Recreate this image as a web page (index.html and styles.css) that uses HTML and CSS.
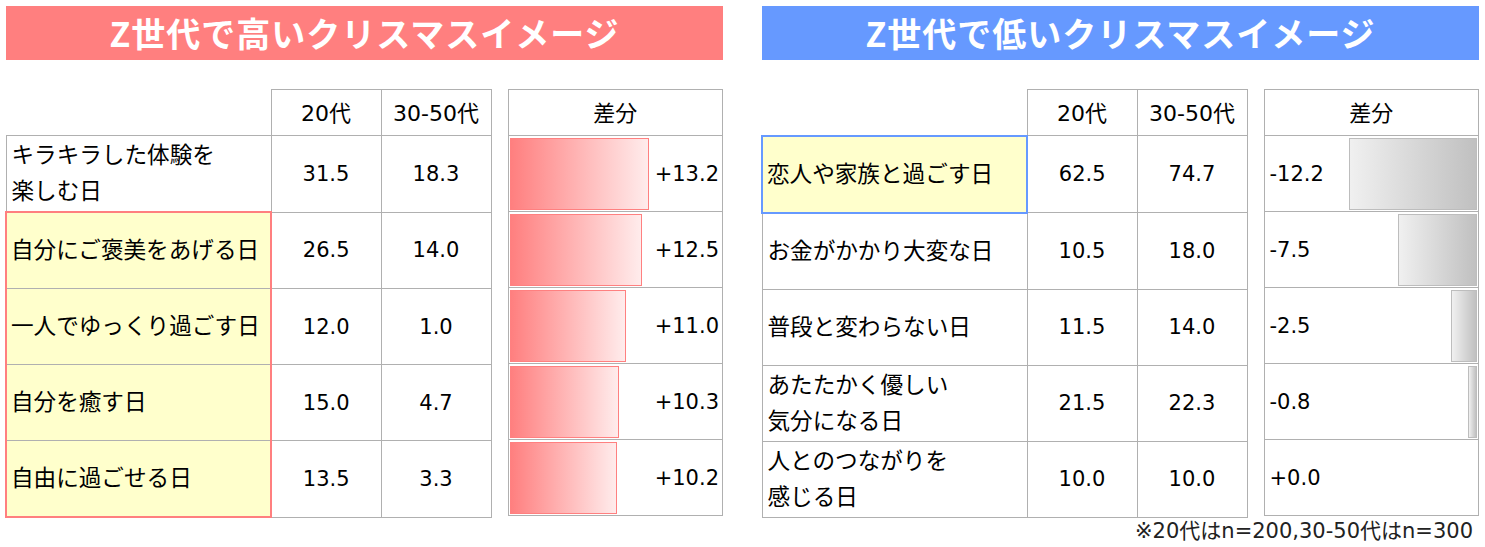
FILE: index.html
```html
<!DOCTYPE html>
<html lang="ja">
<head>
<meta charset="utf-8">
<title>Z世代のクリスマスイメージ</title>
<link rel="stylesheet" href="styles.css">
</head>
<body>
<div class="page">
  <section class="panel">
    <h2 class="title title-pink">Z世代で高いクリスマスイメージ</h2>
    <div class="tables">
      <table class="main">
        <colgroup><col class="c-label"><col class="c-num"><col class="c-num"></colgroup>
        <tr class="head"><th class="blank"></th><th>20代</th><th>30-50代</th></tr>
        <tr><td class="label"><span>キラキラした体験を<br>楽しむ日</span></td><td class="num">31.5</td><td class="num">18.3</td></tr>
        <tr><td class="label hl-pink first">自分にご褒美をあげる日</td><td class="num">26.5</td><td class="num">14.0</td></tr>
        <tr><td class="label hl-pink">一人でゆっくり過ごす日</td><td class="num">12.0</td><td class="num">1.0</td></tr>
        <tr><td class="label hl-pink">自分を癒す日</td><td class="num">15.0</td><td class="num">4.7</td></tr>
        <tr><td class="label hl-pink last">自由に過ごせる日</td><td class="num">13.5</td><td class="num">3.3</td></tr>
      </table>
      <table class="diff">
        <tr class="head"><th>差分</th></tr>
        <tr><td><div class="dcell pos"><div class="bar bar-pink" style="width:139px"></div><span class="val">+13.2</span></div></td></tr>
        <tr><td><div class="dcell pos"><div class="bar bar-pink" style="width:132px"></div><span class="val">+12.5</span></div></td></tr>
        <tr><td><div class="dcell pos"><div class="bar bar-pink" style="width:116px"></div><span class="val">+11.0</span></div></td></tr>
        <tr><td><div class="dcell pos"><div class="bar bar-pink" style="width:109px"></div><span class="val">+10.3</span></div></td></tr>
        <tr><td><div class="dcell pos"><div class="bar bar-pink" style="width:107px"></div><span class="val">+10.2</span></div></td></tr>
      </table>
    </div>
  </section>
  <section class="panel">
    <h2 class="title title-blue">Z世代で低いクリスマスイメージ</h2>
    <div class="tables">
      <table class="main">
        <colgroup><col class="c-label"><col class="c-num"><col class="c-num"></colgroup>
        <tr class="head"><th class="blank"></th><th>20代</th><th>30-50代</th></tr>
        <tr><td class="label hl-blue">恋人や家族と過ごす日</td><td class="num">62.5</td><td class="num">74.7</td></tr>
        <tr><td class="label">お金がかかり大変な日</td><td class="num">10.5</td><td class="num">18.0</td></tr>
        <tr><td class="label">普段と変わらない日</td><td class="num">11.5</td><td class="num">14.0</td></tr>
        <tr><td class="label"><span>あたたかく優しい<br>気分になる日</span></td><td class="num">21.5</td><td class="num">22.3</td></tr>
        <tr><td class="label"><span>人とのつながりを<br>感じる日</span></td><td class="num">10.0</td><td class="num">10.0</td></tr>
      </table>
      <table class="diff">
        <tr class="head"><th>差分</th></tr>
        <tr><td><div class="dcell neg"><span class="val">-12.2</span><div class="bar bar-grey" style="width:128px"></div></div></td></tr>
        <tr><td><div class="dcell neg"><span class="val">-7.5</span><div class="bar bar-grey" style="width:79px"></div></div></td></tr>
        <tr><td><div class="dcell neg"><span class="val">-2.5</span><div class="bar bar-grey" style="width:26px"></div></div></td></tr>
        <tr><td><div class="dcell neg"><span class="val">-0.8</span><div class="bar bar-grey" style="width:9px"></div></div></td></tr>
        <tr><td><div class="dcell neg"><span class="val">+0.0</span></div></td></tr>
      </table>
    </div>
    <p class="note">※20代はn=200,30-50代はn=300</p>
  </section>
</div>
</body>
</html>
```

FILE: styles.css
```css
html, body {
  margin: 0;
  padding: 0;
  background: #fff;
}
body {
  font-family: "DejaVu Sans", "Noto Sans CJK JP", sans-serif;
  color: #000;
}
.page {
  display: flex;
  gap: 39px;
  padding: 6px 6px 0 6px;
}
.panel {
  width: 717px;
  display: flex;
  flex-direction: column;
}
.title {
  margin: 0;
  height: 54px;
  line-height: 54px;
  text-align: center;
  color: #fff;
  font-family: "Noto Sans CJK JP", sans-serif;
  font-weight: 700;
  font-size: 34px;
  letter-spacing: 1px;
}
.title-pink { background: #ff7f7f; }
.title-blue { background: #6699ff; }
.tables {
  display: flex;
  gap: 16px;
  margin-top: 29px;
  margin-left: -1px;
  align-items: flex-start;
}
table {
  border-collapse: collapse;
  table-layout: fixed;
  font-size: 21px;
}
table.main { width: 486px; }
table.diff { width: 216px; }
.c-label { width: 265px; }
.c-num { width: 110px; }
th, td {
  border: 1px solid #b0b0b0;
  padding: 0;
  font-weight: 400;
}
tr.head th {
  height: 41px;
  padding-bottom: 4px;
  text-align: center;
  vertical-align: middle;
  font-size: 22px;
}
th.blank {
  border-top: hidden;
  border-left: hidden;
}
td {
  height: 75px;
  vertical-align: middle;
}
td.label {
  height: 72px;
  padding-left: 5px;
  padding-bottom: 3px;
  line-height: 36px;
  white-space: nowrap;
  font-family: "Noto Sans CJK JP", sans-serif;
  font-size: 22.6px;
}
td.label.hl-pink, td.label.hl-blue {
  padding-left: 4px;
}
td.num {
  text-align: center;
}
td.hl-pink {
  background: #ffffcc;
  border-left: 2px solid #ff7f7f;
  border-right: 2px solid #ff7f7f;
}
td.hl-pink.first { border-top: 2px solid #ff7f7f; }
td.hl-pink.last { border-bottom: 2px solid #ff7f7f; }
td.hl-blue {
  background: #ffffcc;
  border: 2px solid #6699ff;
}
.dcell {
  display: flex;
  align-items: center;
  justify-content: space-between;
  height: 74px;
  box-sizing: border-box;
}
.dcell.pos {
  padding: 1px 3px 1px 1px;
}
.dcell.neg {
  padding: 1px 1px 1px 5px;
}
.bar {
  height: 72px;
  box-sizing: border-box;
}
.bar-pink {
  border: 1px solid #ff8080;
  background: linear-gradient(to right, #ff7f7f, #ffecec);
}
.bar-grey {
  border: 1px solid #bdbdbd;
  background: linear-gradient(to right, #f0f0f0, #c0c0c0);
}
.note {
  margin: 1px 0 0 0;
  padding-right: 6px;
  text-align: right;
  font-size: 21px;
  line-height: 24px;
  color: #222;
}
```
